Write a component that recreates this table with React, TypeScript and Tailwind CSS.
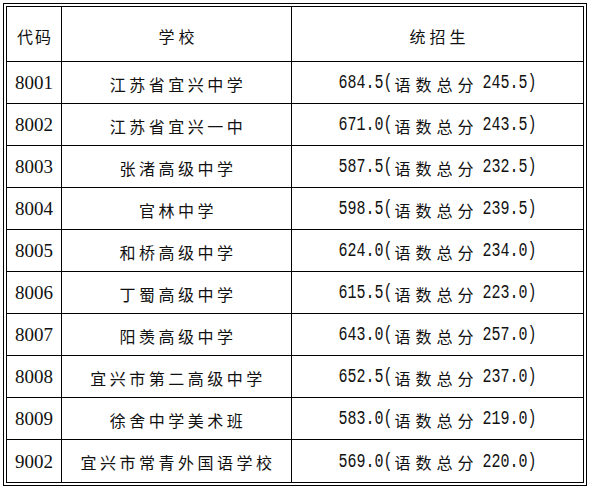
import React from 'react'

const rows = [
    { code: '8001', school: '江苏省宜兴中学', score: '684.5', sub: '245.5' },
    { code: '8002', school: '江苏省宜兴一中', score: '671.0', sub: '243.5' },
    { code: '8003', school: '张渚高级中学', score: '587.5', sub: '232.5' },
    { code: '8004', school: '官林中学', score: '598.5', sub: '239.5' },
    { code: '8005', school: '和桥高级中学', score: '624.0', sub: '234.0' },
    { code: '8006', school: '丁蜀高级中学', score: '615.5', sub: '223.0' },
    { code: '8007', school: '阳羡高级中学', score: '643.0', sub: '257.0' },
    { code: '8008', school: '宜兴市第二高级中学', score: '652.5', sub: '237.0' },
    { code: '8009', school: '徐舍中学美术班', score: '583.0', sub: '219.0' },
    { code: '9002', school: '宜兴市常青外国语学校', score: '569.0', sub: '220.0' },
]

const cjk = "font-['Noto_Sans_CJK_SC',sans-serif]"
const mono = "font-['Liberation_Mono','Noto_Sans_CJK_SC',monospace]"
const serif = "font-['Liberation_Serif','Noto_Sans_CJK_SC',serif]"

// tall narrow digits, like the half-width glyphs of a Song typeface
function Digits({ text, className = '' }: { text: string; className?: string }) {
    return <span className={`inline-block scale-y-[1.3] text-[15px] leading-none whitespace-pre ${mono} ${className}`}>{text}</span>
}

export default function App() {
    return (
        <div className="w-[592px] h-[490px] bg-white pt-[3px] pl-[3px] text-[#111]">
            <div className="w-[584px] h-[483px] border border-black p-[2px]">
                <div className="border border-black h-full flex flex-col">
                    {/* Header */}
                    <div className="grid grid-cols-[55px_230px_1fr] h-[55px] border-b border-black">
                        <div className={`border-r border-black flex items-center justify-center pt-[4px] text-[16px] tracking-[2px] pl-[2px] ${cjk}`}>代码</div>
                        <div className={`border-r border-black flex items-center justify-center pt-[4px] text-[16px] tracking-[4px] pl-[4px] ${cjk}`}>学校</div>
                        <div className={`flex items-center justify-center pt-[4px] text-[16px] tracking-[4px] pl-[4px] ${cjk}`}>统招生</div>
                    </div>

                    {rows.map((r, i) => (
                        <div
                            key={r.code}
                            className={`grid grid-cols-[55px_230px_1fr] h-[42px] ${i < rows.length - 1 ? 'border-b border-black' : ''}`}
                        >
                            <div className={`border-r border-black flex items-center justify-center pt-[2px] text-[19px] ${serif}`}>{r.code}</div>
                            <div className={`border-r border-black flex items-center justify-center pt-[2px] text-[16px] tracking-[3.5px] pl-[3px] ${cjk}`}>{r.school}</div>
                            <div className="flex items-center justify-center pt-[2px] whitespace-pre">
                                <Digits text={`${r.score}(`} />
                                <span className={`${cjk} text-[16px] tracking-[5px] pl-[2px]`}>语数总分</span>
                                <Digits text={` ${r.sub})`} className="-ml-[5px]" />
                            </div>
                        </div>
                    ))}
                </div>
            </div>
        </div>
    )
}
